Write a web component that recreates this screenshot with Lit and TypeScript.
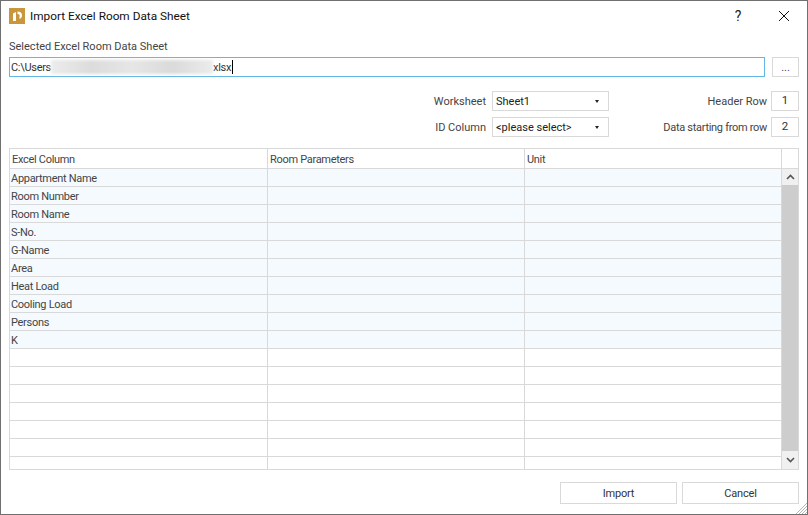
import { LitElement, html, css } from "lit";
import { customElement } from "lit/decorators.js";

const ROWS = [
  "Appartment Name",
  "Room Number",
  "Room Name",
  "S-No.",
  "G-Name",
  "Area",
  "Heat Load",
  "Cooling Load",
  "Persons",
  "K",
  "",
  "",
  "",
  "",
  "",
  "",
  "",
];

@customElement("app-root")
export class AppRoot extends LitElement {
  static styles = css`
    :host {
      display: block;
      width: 808px;
      height: 515px;
      font-family: Roboto, "Liberation Sans", Arial, sans-serif;
      font-size: 11px;
      color: #333;
    }

    .window {
      box-sizing: border-box;
      width: 808px;
      height: 515px;
      border: 1px solid #707070;
      background: #fff;
      display: flex;
      flex-direction: column;
      position: relative;
    }

    .titlebar {
      height: 30px;
      display: flex;
      align-items: center;
      padding-left: 8px;
      color: #111;
      font-size: 11.8px;
    }

    .titlebar svg.logo {
      margin-right: 5px;
    }

    .title {
      flex: 1;
    }

    .help {
      width: 14px;
      font-size: 14px;
      text-align: center;
      margin-right: 33px;
      color: #222;
    }

    .close {
      margin-right: 17px;
    }

    .content {
      flex: 1;
      padding: 8px 8px 9px 8px;
      display: flex;
      flex-direction: column;
    }

    .label {
      line-height: 16px;
      height: 18px;
      color: #444;
    }

    .path-row {
      display: flex;
      gap: 7px;
      height: 20px;
    }

    .path {
      flex: 1;
      box-sizing: border-box;
      border: 1px solid #63b7e6;
      padding-left: 1px;
      display: flex;
      align-items: center;
      letter-spacing: -0.3px;
    }

    .blur {
      width: 162px;
      height: 14px;
      background: linear-gradient(90deg, #ececec, #dcdcdc 25%, #e6e6e6 50%, #dadada 75%, #ececec);
      filter: blur(1.5px);
    }

    .caret {
      width: 1px;
      height: 14px;
      margin-left: 1px;
      background: #000;
    }

    .browse {
      width: 27px;
      box-sizing: border-box;
      border: 1px solid #d9d9d9;
      text-align: center;
      line-height: 20px;
      color: #5a3a8a;
    }

    .options {
      margin-top: 14px;
      display: grid;
      grid-template-columns: 1fr 117px 162px 28px;
      grid-auto-rows: 20px;
      row-gap: 6px;
      align-items: center;
      justify-items: end;
    }

    .caption {
      margin-right: 6px;
      color: #444;
    }

    .caption.right {
      margin-right: 4px;
    }

    .caption.tight {
      letter-spacing: -0.3px;
    }

    .combo,
    .num {
      box-sizing: border-box;
      width: 100%;
      height: 20px;
      border: 1px solid #d9d9d9;
    }

    .combo {
      display: flex;
      align-items: center;
      justify-content: space-between;
      padding: 0 9px 0 3px;
      color: #222;
    }

    .arrow {
      width: 0;
      height: 0;
      border-left: 2.5px solid transparent;
      border-right: 2.5px solid transparent;
      border-top: 3px solid #222;
    }

    .num {
      text-align: center;
      line-height: 17px;
      font-size: 11.5px;
      color: #333;
    }

    .table {
      margin-top: 11px;
      box-sizing: border-box;
      width: 790px;
      height: 322px;
      border: 1px solid #d9d9d9;
      display: grid;
      grid-template-columns: 258px 257px 257px 17px;
      grid-template-rows: 20px 1fr;
      letter-spacing: -0.3px;
    }

    .head {
      box-sizing: border-box;
      border-right: 1px solid #d9d9d9;
      border-bottom: 1px solid #d9d9d9;
      padding-left: 2px;
      line-height: 21px;
      color: #444;
    }

    .head:nth-child(4) {
      border-right: none;
    }

    .body {
      grid-column: 1 / 4;
      display: grid;
      grid-template-columns: 258px 257px 257px;
      grid-auto-rows: 18px;
      overflow: hidden;
    }

    .cell {
      box-sizing: border-box;
      border-right: 1px solid #d9d9d9;
      border-bottom: 1px solid #d9d9d9;
      padding-left: 1px;
      line-height: 19px;
      color: #444;
    }

    .cell.filled {
      background: #f5faff;
    }

    .scroll {
      display: flex;
      flex-direction: column;
      width: 16px;
      background: #f0f0f0;
    }

    .scroll .btn {
      height: 16px;
      display: flex;
      align-items: center;
      justify-content: center;
    }

    .scroll .btn.down {
      height: 18px;
    }

    .scroll .thumb {
      flex: 1;
      background: #cdcdcd;
    }

    .actions {
      margin-top: 12px;
      display: flex;
      justify-content: flex-end;
      gap: 5px;
      letter-spacing: -0.2px;
    }

    .actions div {
      box-sizing: border-box;
      width: 117px;
      height: 22px;
      border: 1px solid #d9d9d9;
      text-align: center;
      line-height: 22px;
      color: #333;
    }

    .grip {
      position: absolute;
      right: 0;
      bottom: 0;
    }
  `;

  render() {
    return html`<div class="window">
      <div class="titlebar">
        <svg class="logo" width="16" height="16" viewBox="0 0 16 16">
          <rect width="16" height="16" fill="#c8963c" />
          <path d="M4 5.5 L7 4 V13 H4 Z" fill="#fff" />
          <path d="M8.5 3.5 C11.5 3.5 13 5 13 7.5 C13 9.5 12 10.5 10.5 11 V8 C11 7 10.5 6 8.5 6 Z" fill="#fff" />
        </svg>
        <span class="title">Import Excel Room Data Sheet</span>
        <span class="help">?</span>
        <svg class="close" width="12" height="12" viewBox="0 0 12 12">
          <path d="M1 1 L11 11 M11 1 L1 11" stroke="#111" stroke-width="1" fill="none" />
        </svg>
      </div>
      <div class="content">
        <div class="label">Selected Excel Room Data Sheet</div>
        <div class="path-row">
          <div class="path">
            <span>C:\\Users</span><span class="blur"></span><span>xlsx</span><span class="caret"></span>
          </div>
          <div class="browse">...</div>
        </div>
        <div class="options">
          <span class="caption">Worksheet</span>
          <div class="combo"><span>Sheet1</span><span class="arrow"></span></div>
          <span class="caption right">Header Row</span>
          <div class="num">1</div>
          <span class="caption">ID Column</span>
          <div class="combo"><span>&lt;please select&gt;</span><span class="arrow"></span></div>
          <span class="caption right tight">Data starting from row</span>
          <div class="num">2</div>
        </div>
        <div class="table">
          <div class="head">Excel Column</div>
          <div class="head">Room Parameters</div>
          <div class="head">Unit</div>
          <div class="head"></div>
          <div class="body">
            ${ROWS.map(
              (r) => html`<div class="cell ${r ? "filled" : ""}">${r}</div>
                <div class="cell ${r ? "filled" : ""}"></div>
                <div class="cell ${r ? "filled" : ""}"></div>`
            )}
          </div>
          <div class="scroll">
            <div class="btn">
              <svg width="9" height="6" viewBox="0 0 9 6"><path d="M1 5 L4.5 1.5 L8 5" stroke="#555" stroke-width="1.6" fill="none" /></svg>
            </div>
            <div class="thumb"></div>
            <div class="btn down">
              <svg width="9" height="6" viewBox="0 0 9 6"><path d="M1 1 L4.5 4.5 L8 1" stroke="#555" stroke-width="1.6" fill="none" /></svg>
            </div>
          </div>
        </div>
        <div class="actions">
          <div>Import</div>
          <div>Cancel</div>
        </div>
      </div>
      <svg class="grip" width="12" height="12" viewBox="0 0 12 12">
        <path d="M12 1 L1 12 M12 4 L4 12 M12 7 L7 12 M12 10 L10 12" stroke="#b5b5b5" stroke-width="1" />
      </svg>
    </div>`;
  }
}
